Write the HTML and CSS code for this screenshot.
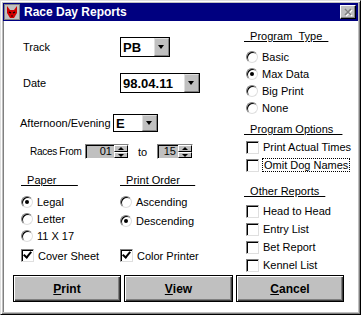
FILE: index.html
```html
<!DOCTYPE html>
<html lang="en">
<head>
    <meta charset="UTF-8">
    <title>Race Day Reports</title>
    <link rel="stylesheet" href="styles.css">
</head>
<body>
    <div class="window">
        <div class="titlebar">
            <svg class="app-icon" width="16" height="16" viewBox="0 0 16 16">
                <rect x="0" y="0" width="16" height="16" fill="#c0c0c0"/>
                <rect x="0.5" y="0.5" width="15" height="15" fill="none" stroke="#808080"/>
                <path d="M3 2 L6 6 L10 6 L13 2 L13 9 L10 14 L6 14 L3 9 Z" fill="#d00000"/>
                <path d="M5 8 L7 9 M11 8 L9 9" stroke="#000" stroke-width="1.2"/>
                <path d="M7 12 L9 12" stroke="#600" stroke-width="1.5"/>
            </svg>
            <span class="title">Race Day Reports</span>
            <div class="close-btn">
                <svg width="10" height="9" viewBox="0 0 10 9">
                    <path d="M2 1 L8 7 M8 1 L2 7" stroke="#fff" stroke-width="1.6" transform="translate(1,1)"/>
                    <path d="M2 1 L8 7 M8 1 L2 7" stroke="#808080" stroke-width="1.6"/>
                </svg>
            </div>
        </div>
        <div class="client">
            <div class="columns">
                <div class="left">
                    <div class="row row-track">
                        <span class="label w-track">Track</span>
                        <div class="combo combo-track"><span class="value">PB</span><span class="drop"></span></div>
                    </div>
                    <div class="row row-date">
                        <span class="label w-track">Date</span>
                        <div class="combo combo-date"><span class="value">98.04.11</span><span class="drop"></span></div>
                    </div>
                    <div class="row row-shift">
                        <span class="label w-shift">Afternoon/Evening</span>
                        <div class="combo combo-shift"><span class="value">E</span><span class="drop"></span></div>
                    </div>
                    <div class="row row-races">
                        <span class="label w-races">Races From</span>
                        <div class="spin spin-from"><span class="value">01</span><span class="spin-btns"><span class="up"></span><span class="down"></span></span></div>
                        <span class="label w-to">to</span>
                        <div class="spin spin-to"><span class="value">15</span><span class="spin-btns"><span class="up"></span><span class="down"></span></span></div>
                    </div>
                    <div class="groups">
                        <div class="group group-paper">
                            <div class="heading">&nbsp;&nbsp;Paper&nbsp;&nbsp;&nbsp;&nbsp;&nbsp;&nbsp;&nbsp;</div>
                            <div class="opt"><span class="radio on"></span>Legal</div>
                            <div class="opt"><span class="radio"></span>Letter</div>
                            <div class="opt"><span class="radio"></span>11 X 17</div>
                            <div class="opt opt-check"><span class="check on"></span>Cover Sheet</div>
                        </div>
                        <div class="group group-order">
                            <div class="heading">&nbsp;&nbsp;Print Order&nbsp;&nbsp;&nbsp;&nbsp;&nbsp;</div>
                            <div class="opt"><span class="radio"></span>Ascending</div>
                            <div class="opt opt-desc"><span class="radio on"></span>Descending</div>
                            <div class="opt opt-spacer"></div>
                            <div class="opt opt-check"><span class="check on"></span>Color Printer</div>
                        </div>
                    </div>
                </div>
                <div class="right">
                    <div class="heading">&nbsp;&nbsp;Program&nbsp;&nbsp;Type&nbsp;&nbsp;</div>
                    <div class="list list-type">
                        <div class="opt"><span class="radio"></span>Basic</div>
                        <div class="opt"><span class="radio on"></span>Max Data</div>
                        <div class="opt"><span class="radio"></span>Big Print</div>
                        <div class="opt"><span class="radio"></span>None</div>
                    </div>
                    <div class="heading heading-options">&nbsp;&nbsp;Program Options&nbsp;&nbsp;&nbsp;</div>
                    <div class="list list-options">
                        <div class="opt opt-tall"><span class="check"></span>Print Actual Times</div>
                        <div class="opt opt-tall"><span class="check"></span><span class="focus">Omit Dog Names</span></div>
                    </div>
                    <div class="heading heading-other">&nbsp;&nbsp;Other Reports&nbsp;&nbsp;</div>
                    <div class="list list-other">
                        <div class="opt opt-tall"><span class="check"></span>Head to Head</div>
                        <div class="opt opt-tall"><span class="check"></span>Entry List</div>
                        <div class="opt opt-tall"><span class="check"></span>Bet Report</div>
                        <div class="opt opt-tall"><span class="check"></span>Kennel List</div>
                    </div>
                </div>
            </div>
            <div class="buttons">
                <div class="btn btn-print"><u>P</u>rint</div>
                <div class="btn btn-view"><u>V</u>iew</div>
                <div class="btn btn-cancel"><u>C</u>ancel</div>
            </div>
        </div>
    </div>
</body>
</html>
```

FILE: styles.css
```css
body {
    margin: 0;
    font-family: "Liberation Sans", Arial, sans-serif;
    font-size: 11px;
    color: #000;
}
.window {
    width: 361px;
    height: 315px;
    box-sizing: border-box;
    background: #c0c0c0;
    border: 1px solid;
    border-color: #dfdfdf #000 #000 #dfdfdf;
    box-shadow: inset 1px 1px #fff, inset -1px -1px #808080;
    padding: 2px;
    display: flex;
    flex-direction: column;
}
.titlebar {
    height: 18px;
    background: #000080;
    display: flex;
    align-items: center;
    padding: 0 2px 0 1px;
}
.app-icon {
    flex: none;
}
.title {
    color: #fff;
    font-weight: bold;
    font-size: 12px;
    margin-left: 4px;
    flex: 1;
}
.close-btn {
    width: 16px;
    height: 14px;
    box-sizing: border-box;
    background: #c0c0c0;
    border: 1px solid;
    border-color: #fff #000 #000 #fff;
    box-shadow: inset -1px -1px #808080;
    display: flex;
    align-items: center;
    justify-content: center;
}
.client {
    flex: 1;
    background: #fff;
    display: flex;
    flex-direction: column;
    box-shadow: inset 1px 0 #808080;
}
.columns {
    height: 254px;
    display: flex;
}
.left {
    width: 241px;
    padding-top: 16px;
}
.right {
    flex: 1;
    padding-top: 8px;
}

/* rows on the left */
.row {
    display: flex;
    align-items: center;
    white-space: nowrap;
}
.row-track {
    height: 20px;
    padding-left: 20px;
}
.row-date {
    height: 20px;
    margin-top: 16px;
    padding-left: 20px;
}
.row-shift {
    height: 18px;
    margin-top: 21px;
    padding-left: 17px;
}
.row-races {
    height: 15px;
    margin-top: 12px;
    padding-left: 27px;
}
.label {
    flex: none;
}
.w-track {
    width: 97px;
}
.w-shift {
    width: 93px;
}
.w-races {
    width: 55px;
    font-size: 10px;
    letter-spacing: -0.3px;
}
.w-to {
    width: 9px;
    margin: 0 10px 0 9px;
}

/* combo boxes */
.combo {
    height: 100%;
    box-sizing: border-box;
    border: 1px solid #000;
    display: flex;
    background: #fff;
}
.combo-track {
    width: 50px;
}
.combo-date {
    width: 80px;
}
.combo-shift {
    width: 45px;
}
.combo .value {
    flex: 1;
    font-weight: bold;
    font-size: 13px;
    padding-left: 2px;
    display: flex;
    align-items: center;
}
.drop {
    width: 15px;
    box-sizing: border-box;
    background: #c0c0c0;
    border: 1px solid;
    border-color: #dfdfdf #808080 #808080 #dfdfdf;
    position: relative;
}
.drop::after {
    content: "";
    position: absolute;
    left: 3px;
    top: 50%;
    margin-top: -2px;
    border-left: 3.5px solid transparent;
    border-right: 3.5px solid transparent;
    border-top: 4px solid #000;
}

/* spinners */
.spin {
    height: 100%;
    box-sizing: border-box;
    display: flex;
    border: 1px solid;
    border-color: #808080 #fff #fff #808080;
    box-shadow: inset 1px 1px #000;
    background: #c0c0c0;
}
.spin-from {
    width: 44px;
}
.spin-to {
    width: 36px;
}
.spin .value {
    flex: 1;
    text-align: right;
    padding-right: 2px;
    line-height: 13px;
    color: #000;
}
.spin-btns {
    width: 14px;
    display: flex;
    flex-direction: column;
}
.spin-btns span {
    flex: 1;
    box-sizing: border-box;
    border: 1px solid;
    border-color: #fff #000 #000 #fff;
    position: relative;
}
.spin-btns span::after {
    content: "";
    position: absolute;
    left: 3px;
    top: 1px;
    border-left: 3px solid transparent;
    border-right: 3px solid transparent;
}
.spin-btns .up::after {
    border-bottom: 3px solid #000;
}
.spin-btns .down::after {
    border-top: 3px solid #000;
}

/* group headings */
.heading {
    height: 14px;
    line-height: 14px;
    text-decoration: underline;
    white-space: nowrap;
}
.groups {
    margin-top: 14px;
    display: flex;
}
.group-paper {
    padding-left: 18px;
    width: 99px;
}
.group .heading {
    margin-bottom: 6px;
}
.opt {
    height: 17px;
    display: flex;
    align-items: center;
    white-space: nowrap;
}
.opt-desc {
    margin-top: 2px;
    margin-bottom: -2px;
}
.opt-check {
    margin-top: 3px;
}
.opt-tall {
    height: 18px;
}

/* right column */
.list-type {
    margin-top: 5px;
}
.heading-options {
    margin-top: 6px;
}
.list-options {
    margin-top: 2px;
}
.heading-other {
    margin-top: 10px;
}
.list-other {
    margin-top: 4px;
}
.right .opt {
    padding-left: 2px;
}

/* radio buttons and check boxes */
.radio {
    width: 12px;
    height: 12px;
    box-sizing: border-box;
    border-radius: 50%;
    border: 1px solid;
    border-color: #808080 #dfdfdf #dfdfdf #808080;
    box-shadow: inset 1px 1px #000;
    margin-right: 4px;
    position: relative;
    flex: none;
}
.radio.on::after {
    content: "";
    position: absolute;
    left: 3px;
    top: 3px;
    width: 4px;
    height: 4px;
    border-radius: 50%;
    background: #000;
}
.check {
    width: 13px;
    height: 13px;
    box-sizing: border-box;
    border: 1px solid;
    border-color: #808080 #dfdfdf #dfdfdf #808080;
    box-shadow: inset 1px 1px #000;
    margin-right: 4px;
    position: relative;
    flex: none;
}
.check.on::after {
    content: "";
    position: absolute;
    left: 3px;
    top: 0px;
    width: 3px;
    height: 6px;
    border: solid #000;
    border-width: 0 2px 2px 0;
    transform: rotate(40deg);
}
.focus {
    outline: 1px dotted #000;
    outline-offset: 0;
    padding: 0 1px;
}

/* buttons */
.buttons {
    height: 27px;
    display: flex;
    gap: 3px;
    padding-left: 10px;
}
.btn {
    box-sizing: border-box;
    height: 27px;
    background: #c0c0c0;
    border: 1px solid #000;
    box-shadow: inset 1px 1px #fff, inset -1px -1px #404040, inset -2px -2px #808080;
    font-weight: bold;
    font-size: 12px;
    display: flex;
    align-items: center;
    justify-content: center;
}
.btn-print {
    width: 108px;
}
.btn-view {
    width: 109px;
}
.btn-cancel {
    width: 108px;
}
```
